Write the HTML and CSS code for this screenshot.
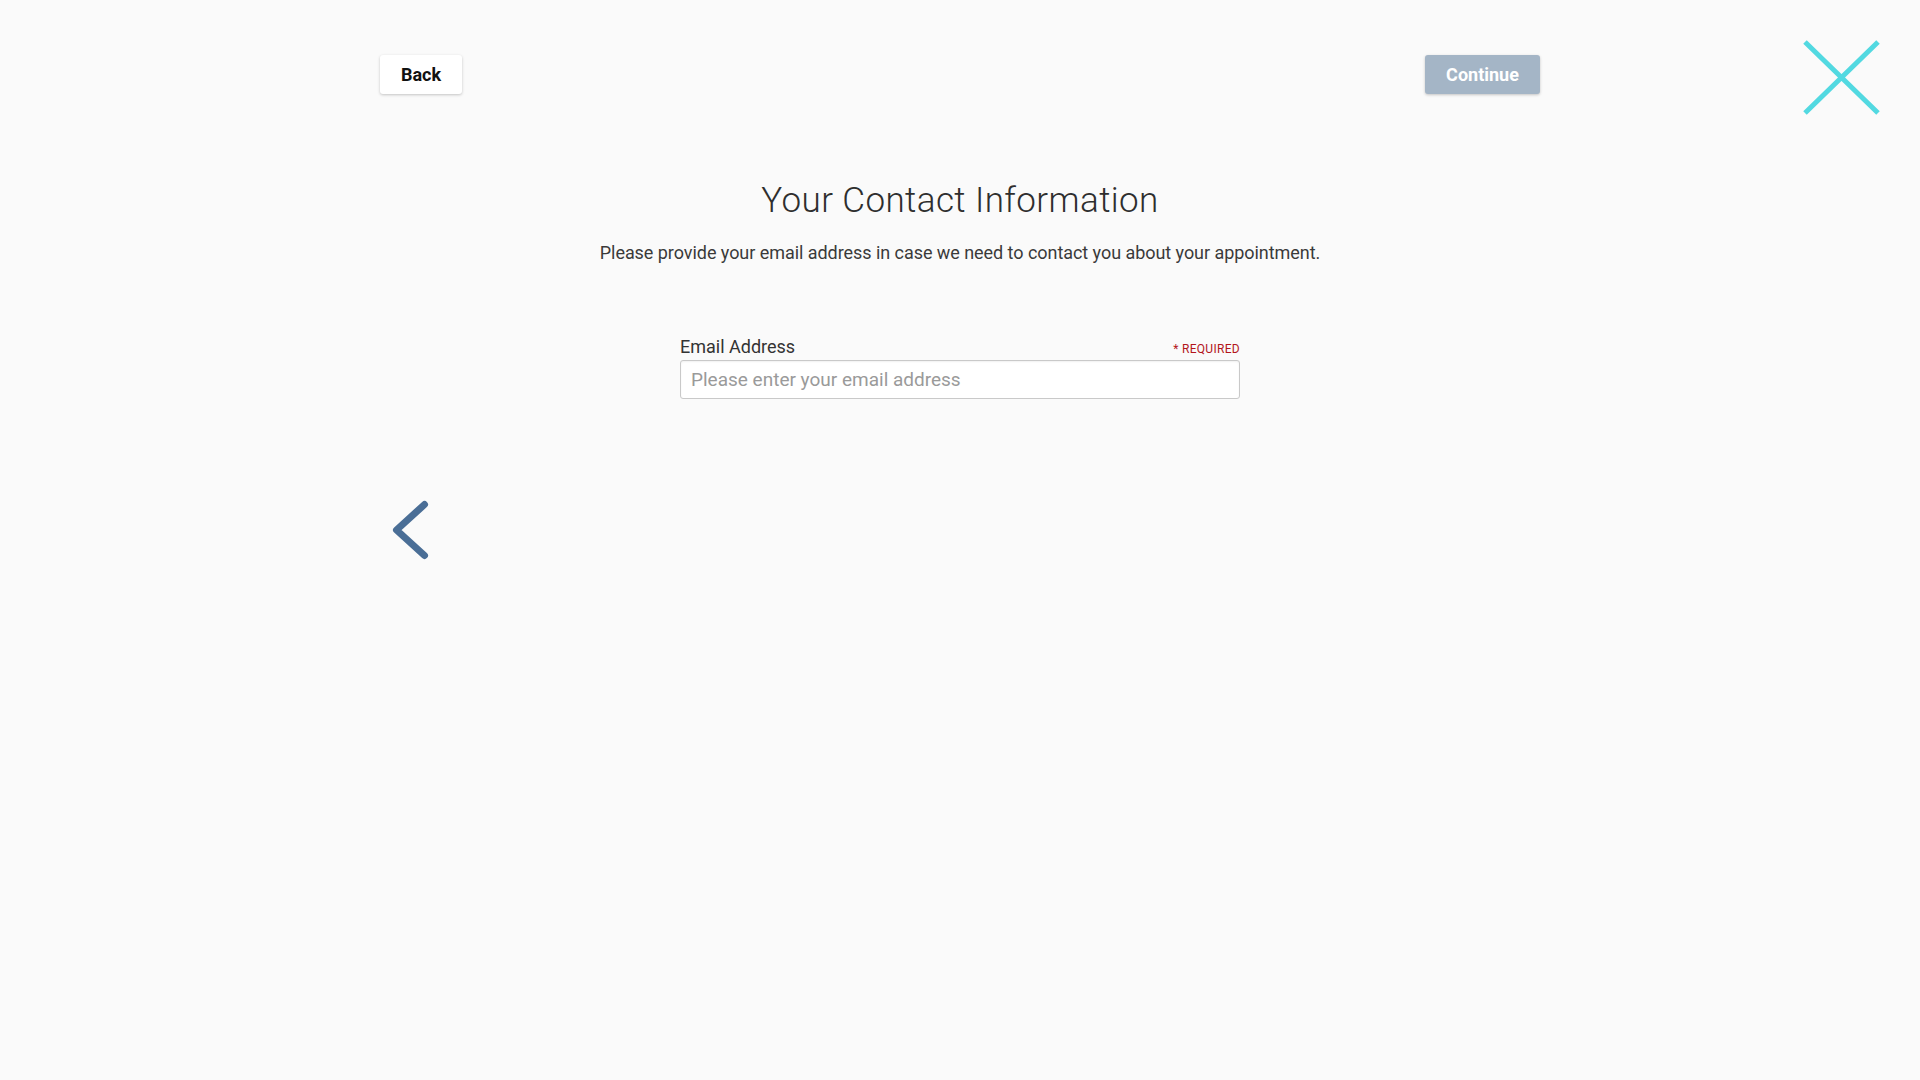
FILE: index.html
```html
<!DOCTYPE html>
<html lang="en">
<head>
<meta charset="utf-8">
<title>Your Contact Information</title>
<link rel="stylesheet" href="styles.css">
</head>
<body>
<a class="close" href="#" aria-label="Close">
  <svg width="77" height="75" viewBox="0 0 77 75"><path d="M2 2 L75 73 M75 2 L2 73" stroke="#52d9e1" stroke-width="5" fill="none"/></svg>
</a>
<div class="page">
  <div class="topbar">
    <button class="btn btn-back">Back</button>
    <button class="btn btn-continue">Continue</button>
  </div>
  <h1 class="title">Your Contact Information</h1>
  <p class="subtitle">Please provide your email address in case we need to contact you about your appointment.</p>
  <form class="form">
    <div class="label-row">
      <label class="label" for="email">Email Address</label>
      <span class="required">* REQUIRED</span>
    </div>
    <input class="input" id="email" type="email" placeholder="Please enter your email address">
  </form>
  <a class="prev" href="#" aria-label="Previous">
    <svg width="38" height="62" viewBox="0 0 38 62"><path d="M32.5 5.5 L4.5 31 L32.5 56.5" stroke="#4a6e96" stroke-width="7" stroke-linecap="round" stroke-linejoin="round" fill="none"/></svg>
  </a>
</div>
</body>
</html>
```

FILE: styles.css
```css
html, body {
  margin: 0;
  padding: 0;
  background: #fafafa;
  font-family: Roboto, "Liberation Sans", sans-serif;
  color: #333;
}

.close {
  position: absolute;
  top: 40px;
  right: 40px;
  display: block;
  line-height: 0;
}

.page {
  width: 1160px;
  margin: 0 auto;
  padding-top: 55px;
}

.topbar {
  display: flex;
  justify-content: space-between;
  align-items: center;
}

.btn {
  height: 39px;
  padding: 0 20px;
  border: none;
  border-radius: 3px;
  font-family: Roboto, "Liberation Sans", sans-serif;
  font-size: 18px;
  font-weight: 700;
  cursor: pointer;
  box-shadow: 0 1px 3px rgba(0, 0, 0, 0.22);
}

.btn-back {
  width: 82px;
  background: #ffffff;
  color: #111;
}

.btn-continue {
  width: 115px;
  background: #a4b5c6;
  color: #fff;
}

.title {
  margin: 83px 0 0;
  text-align: center;
  font-size: 35px;
  font-weight: 300;
  line-height: 48px;
  letter-spacing: 0.4px;
  color: #2e2e2e;
}

.subtitle {
  margin: 16px 0 0;
  text-align: center;
  font-size: 18px;
  font-weight: 400;
  line-height: 24px;
  letter-spacing: -0.05px;
  color: #3a3a3a;
}

.form {
  width: 560px;
  margin: 71px auto 0;
}

.label-row {
  display: flex;
  justify-content: space-between;
  align-items: baseline;
  margin-bottom: 2px;
}

.label {
  font-size: 18px;
  line-height: 22px;
  color: #333;
}

.required {
  font-size: 12px;
  color: #b3151b;
  letter-spacing: 0.3px;
}

.input {
  display: block;
  box-sizing: border-box;
  width: 560px;
  height: 39px;
  padding: 0 10px;
  border: 1px solid #c9c9c9;
  border-radius: 3px;
  background: #fff;
  font-family: Roboto, "Liberation Sans", sans-serif;
  font-size: 19px;
  color: #333;
  box-shadow: inset 0 1px 2px rgba(0, 0, 0, 0.06);
}

.input::placeholder {
  color: #9a9a9a;
}

.prev {
  display: block;
  width: 38px;
  margin: 100px 0 0 12px;
  line-height: 0;
}
```
